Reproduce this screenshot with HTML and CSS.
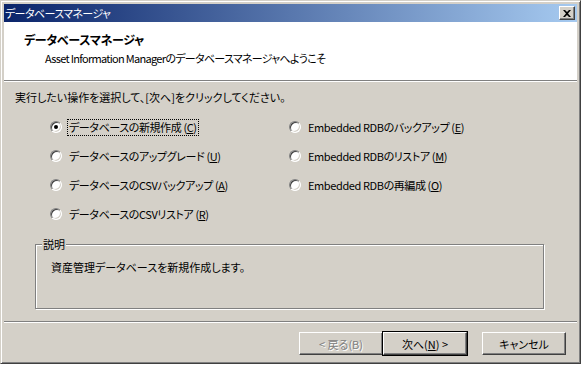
FILE: index.html
```html
<!DOCTYPE html>
<html lang="ja">
<head>
    <meta charset="UTF-8">
    <title>データベースマネージャ</title>
    <link rel="stylesheet" href="styles.css">
</head>
<body>

    <div class="window">
        <!-- Title bar -->
        <div class="titlebar">
            <span class="title">データベースマネージャ</span>
            <span class="close-btn">
                <svg width="8" height="7" viewBox="0 0 8 7">
                    <path d="M0 0h2l2 2 2-2h2L5 3.5 8 7H6L4 5 2 7H0l3-3.5z" fill="#000"/>
                </svg>
            </span>
        </div>

        <!-- White header -->
        <div class="header">
            <h1>データベースマネージャ</h1>
            <p>Asset Information Managerのデータベースマネージャへようこそ</p>
        </div>

        <!-- Main body -->
        <div class="content">
            <p class="instruction">実行したい操作を選択して、[次へ]をクリックしてください。</p>

            <div class="options">
                <div class="option"><span class="radio checked"></span><span class="label focus">データベースの新規作成 (<u>C</u>)</span></div>
                <div class="option"><span class="radio"></span><span class="label">Embedded RDBのバックアップ (<u>E</u>)</span></div>
                <div class="option"><span class="radio"></span><span class="label">データベースのアップグレード (<u>U</u>)</span></div>
                <div class="option"><span class="radio"></span><span class="label">Embedded RDBのリストア (<u>M</u>)</span></div>
                <div class="option"><span class="radio"></span><span class="label">データベースのCSVバックアップ (<u>A</u>)</span></div>
                <div class="option"><span class="radio"></span><span class="label">Embedded RDBの再編成 (<u>O</u>)</span></div>
                <div class="option"><span class="radio"></span><span class="label">データベースのCSVリストア (<u>R</u>)</span></div>
            </div>

            <div class="groupbox">
                <span class="legend">説明</span>
                <p>資産管理データベースを新規作成します。</p>
            </div>
        </div>

        <div class="separator"></div>

        <!-- Buttons -->
        <div class="buttons">
            <button class="btn" disabled>&lt; 戻る(B)</button>
            <button class="btn default">次へ(<u>N</u>) &gt;</button>
            <button class="btn cancel">キャンセル</button>
        </div>
    </div>

</body>
</html>
```

FILE: styles.css
```css
/* Basic reset */
html, body {
    margin: 0;
    padding: 0;
    background-color: #fff;
    font-family: "Noto Sans CJK JP", sans-serif;
    font-size: 11px;
    font-feature-settings: "palt";
    color: #000;
}

/* Win2000 style dialog frame */
.window {
    width: 581px;
    height: 364px;
    box-sizing: border-box;
    background-color: #d4d0c8;
    border: 1px solid;
    border-color: #d4d0c8 #404040 #404040 #d4d0c8;
    box-shadow: inset 1px 1px 0 #fff, inset -1px -1px 0 #808080;
    padding: 3px;
    display: flex;
    flex-direction: column;
}

/* Title bar */
.titlebar {
    height: 18px;
    flex: 0 0 18px;
    display: flex;
    align-items: center;
    justify-content: space-between;
    padding: 0 2px 0 1px;
    background: linear-gradient(to right, #0a246a, #a6caf0);
}

.titlebar .title {
    color: #fff;
    font-size: 11px;
    line-height: 18px;
    letter-spacing: -0.6px;
}

.close-btn {
    width: 16px;
    height: 14px;
    box-sizing: border-box;
    background-color: #d4d0c8;
    border: 1px solid;
    border-color: #fff #404040 #404040 #fff;
    box-shadow: inset -1px -1px 0 #808080;
    display: flex;
    align-items: center;
    justify-content: center;
}

/* Header area */
.header {
    background-color: #fff;
    height: 59px;
    flex: 0 0 59px;
    box-sizing: border-box;
    padding: 10px 0 0 20px;
    border-bottom: 1px solid #808080;
}

.header h1 {
    margin: 0;
    font-size: 12px;
    font-weight: bold;
    line-height: 16px;
    letter-spacing: -0.3px;
}

.header p {
    margin: 2px 0 0 21px;
    line-height: 16px;
    letter-spacing: -0.7px;
}

/* Body */
.content {
    flex: 1;
    border-top: 1px solid #fff;
    padding: 7px 0 0 12px;
}

.instruction {
    margin: 0 0 0 -1px;
    line-height: 16px;
}

.options {
    display: grid;
    grid-template-columns: 239px 1fr;
    row-gap: 13px;
    margin: 14px 0 0 34px;
}

.option {
    display: flex;
    align-items: center;
    height: 16px;
}

.radio {
    width: 12px;
    height: 12px;
    box-sizing: border-box;
    border-radius: 50%;
    background-color: #fff;
    border: 1px solid;
    border-color: #808080 #fff #fff #808080;
    box-shadow: inset 1px 1px 0 #404040, inset -1px -1px 0 #d4d0c8;
    margin-right: 5px;
    position: relative;
}

.radio.checked::after {
    content: "";
    position: absolute;
    left: 3px;
    top: 3px;
    width: 4px;
    height: 4px;
    border-radius: 50%;
    background-color: #000;
}

.label {
    line-height: 15px;
    padding: 0 1px;
    border: 1px dotted transparent;
    letter-spacing: -0.4px;
}

.label.focus {
    border-color: #000;
}

/* Description group box */
.groupbox {
    position: relative;
    margin: 22px 33px 0 19px;
    height: 65px;
    border: 1px solid #808080;
    box-shadow: 1px 1px 0 #fff, inset 1px 1px 0 #fff;
    padding: 14px 0 0 15px;
    box-sizing: border-box;
}

.groupbox .legend {
    position: absolute;
    top: -9px;
    left: 6px;
    padding: 0 1px;
    background-color: #d4d0c8;
    line-height: 16px;
}

.groupbox p {
    margin: 0;
    line-height: 16px;
}

.separator {
    height: 0;
    border-top: 1px solid #808080;
    border-bottom: 1px solid #fff;
}

/* Buttons */
.buttons {
    display: flex;
    justify-content: flex-end;
    height: 37px;
    box-sizing: border-box;
    padding: 9px 11px 0 0;
}

.btn {
    width: 84px;
    height: 23px;
    font-family: "Noto Sans CJK JP", sans-serif;
    font-size: 11px;
    font-feature-settings: "palt";
    background-color: #d4d0c8;
    color: #000;
    border: 1px solid;
    border-color: #fff #404040 #404040 #fff;
    box-shadow: inset -1px -1px 0 #808080;
    padding: 0;
}

.btn:disabled {
    color: #808080;
    text-shadow: 1px 1px 0 #fff;
}

.btn.default {
    outline: 1px solid #000;
}

.btn.cancel {
    margin-left: 15px;
}
```
